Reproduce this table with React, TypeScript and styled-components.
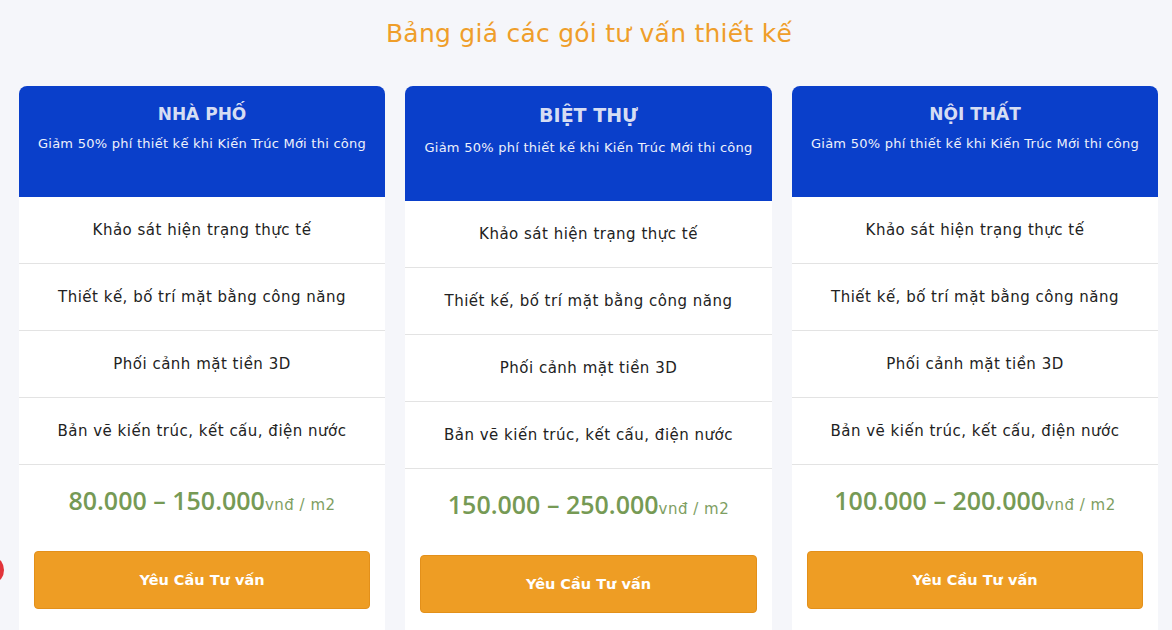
import * as React from "react";
import styled, { createGlobalStyle } from "styled-components";

const GlobalStyle = createGlobalStyle`
  html, body {
    margin: 0;
    padding: 0;
    background: #f5f6fa;
    font-family: "DejaVu Sans", "Open Sans", sans-serif;
    overflow: hidden;
  }
`;

const Page = styled.div`
  position: relative;
  width: 1172px;
  height: 630px;
  overflow: hidden;
  background: #f5f6fa;
`;

const Title = styled.h2`
  margin: 0;
  padding-top: 16px;
  height: 86px;
  box-sizing: border-box;
  text-align: center;
  font-size: 25px;
  font-weight: 400;
  letter-spacing: 0.25px;
  color: #ef9e2a;
  line-height: 36px;
  padding-left: 6px;
`;

const Cards = styled.div`
  display: flex;
  gap: 20px;
  padding-left: 19px;
  align-items: flex-start;
`;

const Card = styled.div<{ $featured?: boolean }>`
  width: ${(p) => (p.$featured ? 367 : 366)}px;
  background: #fff;
  border-radius: 8px 8px 0 0;
  display: flex;
  flex-direction: column;
  height: 560px;
`;

const Header = styled.div<{ $featured?: boolean }>`
  background: #0a3fca;
  border-radius: 8px 8px 0 0;
  height: ${(p) => (p.$featured ? 115 : 111)}px;
  box-sizing: border-box;
  padding-top: ${(p) => (p.$featured ? 15 : 16)}px;
  text-align: center;
  color: #dfe5f6;
`;

const Name = styled.div<{ $featured?: boolean }>`
  font-size: ${(p) => (p.$featured ? 19 : 17)}px;
  font-weight: 700;
  line-height: ${(p) => (p.$featured ? 28 : 24)}px;
  color: #d6ddf3;
`;

const Sub = styled.div<{ $featured?: boolean }>`
  font-size: 13px;
  letter-spacing: 0.25px;
  margin-top: ${(p) => (p.$featured ? 10 : 9)}px;
  line-height: 18px;
  color: #eef1fb;
`;

const Feature = styled.div`
  height: 67px;
  display: flex;
  align-items: center;
  justify-content: center;
  border-bottom: 1px solid #e3e3e3;
  font-size: 15px;
  letter-spacing: 0.5px;
  color: #222;
  padding-bottom: 1px;
  box-sizing: border-box;
`;

const Price = styled.div`
  height: 70px;
  display: flex;
  align-items: baseline;
  justify-content: center;
  padding-top: 18px;
  box-sizing: border-box;
  color: #769a55;
`;

const Amount = styled.span`
  font-family: "Open Sans", sans-serif;
  font-size: 25px;
  font-weight: 600;
  letter-spacing: 0;
`;

const Unit = styled.span`
  font-size: 15px;
  letter-spacing: 0.5px;
  color: #7e9e62;
`;

const Button = styled.button`
  margin: 16px 15px 0;
  height: 58px;
  border: 1px solid #e3901a;
  border-radius: 4px;
  background: #ee9d24;
  color: #fff;
  font-family: inherit;
  font-size: 14.5px;
  font-weight: 700;
  cursor: pointer;
`;

const RedDot = styled.div`
  position: absolute;
  left: -14px;
  top: 558px;
  width: 18px;
  height: 24px;
  border-radius: 50%;
  background: #e2343a;
`;

type Plan = {
  name: string;
  min: string;
  max: string;
  featured?: boolean;
};

const plans: Plan[] = [
  { name: "NHÀ PHỐ", min: "80.000", max: "150.000" },
  { name: "BIỆT THỰ", min: "150.000", max: "250.000", featured: true },
  { name: "NỘI THẤT", min: "100.000", max: "200.000" },
];

const features = [
  "Khảo sát hiện trạng thực tế",
  "Thiết kế, bố trí mặt bằng công năng",
  "Phối cảnh mặt tiền 3D",
  "Bản vẽ kiến trúc, kết cấu, điện nước",
];

export default function App() {
  return (
    <Page>
      <GlobalStyle />
      <Title>Bảng giá các gói tư vấn thiết kế</Title>
      <Cards>
        {plans.map((plan) => (
          <Card key={plan.name} $featured={plan.featured}>
            <Header $featured={plan.featured}>
              <Name $featured={plan.featured}>{plan.name}</Name>
              <Sub $featured={plan.featured}>
                Giảm 50% phí thiết kế khi Kiến Trúc Mới thi công
              </Sub>
            </Header>
            {features.map((f) => (
              <Feature key={f}>{f}</Feature>
            ))}
            <Price>
              <Amount>
                {plan.min} – {plan.max}
              </Amount>
              <Unit>vnđ / m2</Unit>
            </Price>
            <Button>Yêu Cầu Tư vấn</Button>
          </Card>
        ))}
      </Cards>
      <RedDot />
    </Page>
  );
}
